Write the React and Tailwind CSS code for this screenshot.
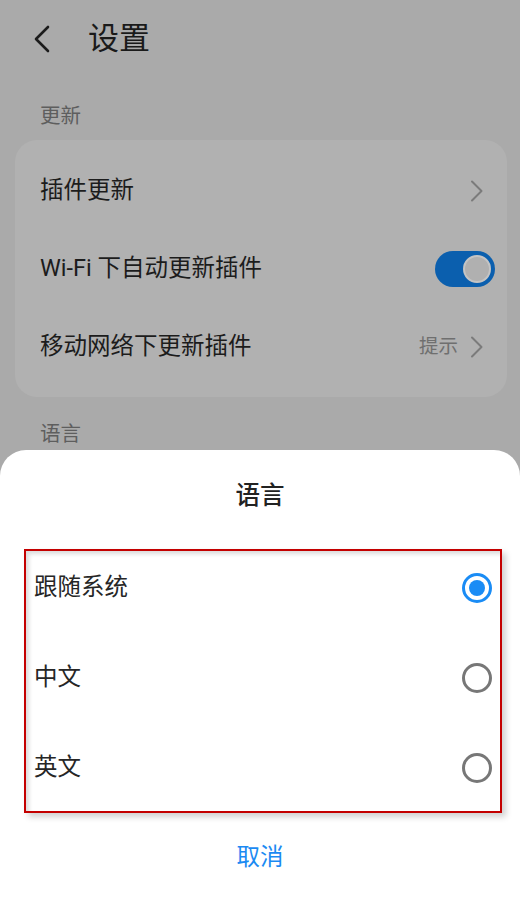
import React from "react";

const font = { fontFamily: 'Roboto, "Noto Sans CJK SC", sans-serif' };

function ChevronRight() {
  return (
    <svg width="14" height="22" viewBox="0 0 14 22" fill="none">
      <path d="M2 1.5 L11.5 11 L2 20.5" stroke="#7b7b7b" strokeWidth="2" strokeLinecap="round" strokeLinejoin="round" />
    </svg>
  );
}

function Radio({ checked }) {
  if (checked) {
    return (
      <div className="w-[30px] h-[30px] rounded-full border-[3px] border-[#1a8cf5] flex items-center justify-center">
        <div className="w-[16px] h-[16px] rounded-full bg-[#1a8cf5]" />
      </div>
    );
  }
  return <div className="w-[30px] h-[30px] rounded-full border-[3px] border-[#777777]" />;
}

export default function App() {
  return (
    <div className="w-[520px] h-[916px] relative overflow-hidden bg-[#aaaaaa]" style={font}>
      {/* header */}
      <div className="h-[76px] flex items-center pt-[2px]">
        <div className="w-[88px] flex items-center pl-[31px]">
          <svg width="22" height="28" viewBox="0 0 22 28" fill="none">
            <path d="M17 2 L5 14 L17 26" stroke="#1c1c1c" strokeWidth="2.6" strokeLinecap="round" strokeLinejoin="round" />
          </svg>
        </div>
        <div className="text-[31px] leading-[40px] text-[#1a1a1a]">设置</div>
      </div>

      <div className="pt-[26px] pl-[40px] text-[20.5px] leading-[28px] text-[#5e5e5e]">更新</div>

      <div className="mt-[10px] mx-[15px] w-[492px] rounded-[22px] bg-[#b1b1b1] pt-[12px] pb-[11px]">
        <div className="h-[78px] flex items-center justify-between pl-[25px] pr-[23px]">
          <span className="text-[23.5px] text-[#1c1c1c]">插件更新</span>
          <ChevronRight />
        </div>
        <div className="h-[78px] flex items-center justify-between pl-[25px] pr-[12px]">
          <span className="text-[23.5px] text-[#1c1c1c]">Wi-Fi 下自动更新插件</span>
          <div className="w-[60px] h-[36px] rounded-full bg-[#0b5fae] flex items-center justify-end pr-[4px]">
            <div className="w-[28px] h-[28px] rounded-full bg-[#b0b0b0] border-[2px] border-[#c4c4c4]" />
          </div>
        </div>
        <div className="h-[78px] flex items-center justify-between pl-[25px] pr-[23px]">
          <span className="text-[23.5px] text-[#1c1c1c]">移动网络下更新插件</span>
          <div className="flex items-center gap-[12px]">
            <span className="text-[19.5px] text-[#6f6f6f]">提示</span>
            <ChevronRight />
          </div>
        </div>
      </div>

      <div className="pt-[23px] pl-[40px] text-[20.5px] leading-[28px] text-[#5e5e5e]">语言</div>

      {/* bottom sheet */}
      <div className="absolute left-0 right-0 top-[450px] bottom-0 bg-white rounded-t-[26px] flex flex-col items-center">
        <div className="pt-[30px] text-[24.5px] leading-[32px] font-medium text-[#222222]">语言</div>
        <div className="self-start ml-[24px] mt-[37px] w-[478px] h-[264px] border-[2px] border-[#c40000] shadow-[4px_4px_6px_rgba(0,0,0,0.18),inset_5px_5px_4px_-2px_rgba(0,0,0,0.14)] flex flex-col pt-[17px] pl-[8px] pr-[8px] gap-[50px]">
          <div className="h-[40px] flex items-center justify-between">
            <span className="text-[23.5px] text-[#262626]">跟随系统</span>
            <Radio checked />
          </div>
          <div className="h-[40px] flex items-center justify-between">
            <span className="text-[23.5px] text-[#262626]">中文</span>
            <Radio />
          </div>
          <div className="h-[40px] flex items-center justify-between">
            <span className="text-[23.5px] text-[#262626]">英文</span>
            <Radio />
          </div>
        </div>
        <div className="mt-[28px] text-[23.5px] leading-[32px] text-[#1b8af2]">取消</div>
      </div>
    </div>
  );
}
